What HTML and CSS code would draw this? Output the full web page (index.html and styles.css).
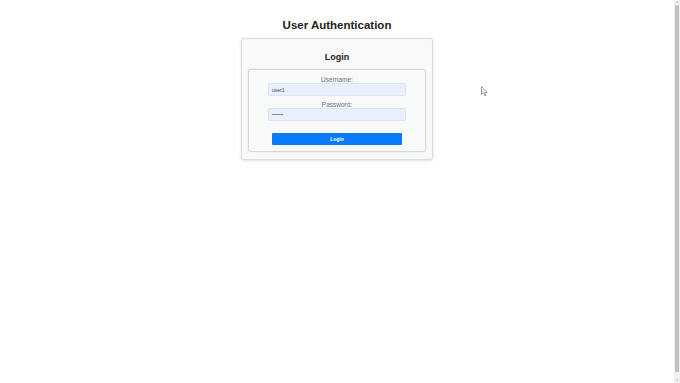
FILE: index.html
```html
<!DOCTYPE html>
<html lang="en">
<head>
  <meta charset="UTF-8">
  <meta name="viewport" content="width=device-width, initial-scale=1.0">
  <title>User Authentication</title>
  <link rel="stylesheet" href="styles.css">
</head>
<body>
  <div class="page">
    <div class="content">
      <h1>User Authentication</h1>

      <div class="card">
        <h2>Login</h2>
        <form class="login-form" onsubmit="return false">
          <label for="username">Username:</label>
          <input type="text" id="username" value="user1">
          <label for="password">Password:</label>
          <input type="password" id="password" value="password">
          <button type="submit">Login</button>
        </form>
      </div>
    </div>

    <div class="scrollbar">
      <div class="scroll-arrow">&#9650;</div>
      <div class="scroll-thumb"></div>
      <div class="scroll-arrow">&#9660;</div>
    </div>
  </div>

  <svg class="cursor" width="7" height="11" viewBox="0 0 7 11">
    <path d="M0.5 0.5 L0.5 8.5 L2.5 6.8 L3.8 9.8 L5 9.3 L3.8 6.4 L6.3 6.4 Z" fill="#fff" stroke="#777" stroke-width="0.7"/>
  </svg>
</body>
</html>
```

FILE: styles.css
```css
body {
  font-family: "Liberation Sans", Arial, sans-serif;
  margin: 0;
  padding: 0;
  background-color: #fff;
  overflow: hidden;
}
.page {
  display: flex;
  height: 383px;
}
.content {
  flex: 1;
  display: flex;
  flex-direction: column;
  align-items: center;
  padding-top: 18px;
}
h1 {
  margin: 0 0 6px;
  font-size: 11.5px;
  line-height: 14px;
  color: #222;
}
.card {
  width: 178px;
  padding: 12px 6px 7px;
  background-color: #f8f9f9;
  border: 1px solid #dcdcdc;
  border-radius: 3px;
  box-shadow: 0 1px 3px rgba(0,0,0,0.12);
}
.card h2 {
  margin: 0 0 6px;
  font-size: 9px;
  line-height: 12px;
  text-align: center;
  color: #222;
}
.login-form {
  display: flex;
  flex-direction: column;
  align-items: center;
  padding: 6px 19px 6px;
  background-color: #f8f9f9;
  border: 1px solid #d6d6d6;
  border-radius: 3px;
  box-shadow: 0 0 2px rgba(0,0,0,0.12);
}
.login-form label {
  font-size: 6.5px;
  line-height: 7px;
  color: #707070;
}
.login-form input {
  box-sizing: border-box;
  width: 138px;
  height: 13px;
  margin: 0 0 5px;
  padding: 0 3px;
  font-family: inherit;
  font-size: 5px;
  color: #444;
  background-color: #e8f0fe;
  border: 1px solid #dde3ee;
  border-radius: 2px;
}
.login-form input[type="password"] {
  margin-bottom: 12px;
  font-size: 4px;
}
.login-form button {
  width: 130px;
  height: 12px;
  padding: 0;
  font-family: inherit;
  font-size: 5px;
  font-weight: bold;
  color: #fff;
  background-color: #0a7bff;
  border: none;
  border-radius: 1px;
  cursor: pointer;
}
.scrollbar {
  width: 6px;
  display: flex;
  flex-direction: column;
  background-color: #f1f1f1;
}
.scroll-arrow {
  height: 5px;
  font-size: 3px;
  line-height: 5px;
  text-align: center;
  color: #a3a3a3;
}
.scroll-thumb {
  flex: 1;
  margin: 0 1px 6px;
  background-color: #c1c1c1;
}
.cursor {
  position: absolute;
  left: 481px;
  top: 86px;
}
```
